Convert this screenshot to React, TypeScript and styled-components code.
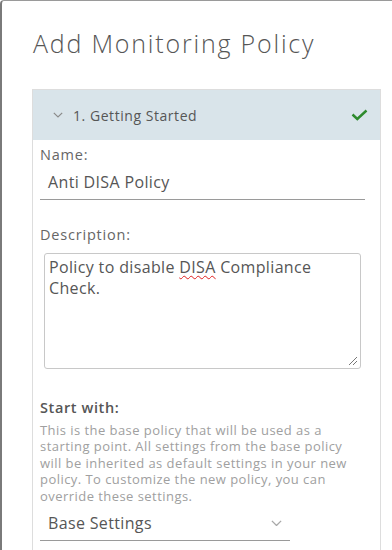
import React from "react";
import styled, { createGlobalStyle } from "styled-components";

const Global = createGlobalStyle`
  html, body { margin: 0; padding: 0; background: #ffffff; }
  body { font-family: "Open Sans", "Liberation Sans", sans-serif; color: #565656; }
  * { box-sizing: border-box; }
`;

const Modal = styled.div`
  width: 392px;
  height: 550px;
  border-top: 1px solid #9a9a9a;
  border-left: 2px solid #7a7a7a;
  border-top-left-radius: 4px;
  padding: 26px 0 0 30px;
  overflow: hidden;
  background: #fff;
`;

const Title = styled.h1`
  margin: 0 0 30px 1px;
  font-size: 25px;
  line-height: 32px;
  font-weight: 300;
  color: #565656;
  letter-spacing: 1.8px;
  white-space: nowrap;
`;

const Panel = styled.section`
  width: 349px;
  border: 1px solid #dddddd;
  border-bottom: none;
  height: 470px;
`;

const Header = styled.div`
  height: 50px;
  background: #d9e4ea;
  display: flex;
  align-items: center;
  padding: 0 12px 0 20px;
  gap: 10px;
`;

const HeaderTitle = styled.span`
  flex: 1;
  font-size: 14px;
  color: #565656;
  padding-top: 1px;
  letter-spacing: 0.55px;
`;

const Body = styled.div`
  padding: 5px 15px 0 7px;
  display: flex;
  flex-direction: column;
`;

const Label = styled.label<{ $bold?: boolean }>`
  font-size: 14.5px;
  line-height: 20px;
  color: ${(p) => (p.$bold ? "#565656" : "#666666")};
  font-weight: ${(p) => (p.$bold ? 600 : 400)};
  letter-spacing: ${(p) => (p.$bold ? "0.6px" : "0.8px")};
`;

const UnderlineField = styled.div<{ $width: number }>`
  width: ${(p) => p.$width}px;
  border-bottom: 1px solid #9a9a9a;
  height: 35px;
  padding: 0 8px;
  display: flex;
  align-items: center;
  justify-content: space-between;
  font-size: 16px;
  letter-spacing: 0.35px;
  color: #565656;
`;

const Spacer = styled.div<{ $h: number }>`
  height: ${(p) => p.$h}px;
`;

const TextArea = styled.div`
  position: relative;
  margin-left: 4px;
  width: 317px;
  height: 116px;
  border: 1px solid #c8c8c8;
  border-radius: 3px;
  padding: 3px 4px;
  font-size: 16px;
  letter-spacing: 0.35px;
  line-height: 21px;
  color: #565656;
`;

const Misspelled = styled.span`
  text-decoration: underline wavy #e02020;
  text-decoration-thickness: 1px;
  text-underline-offset: 2px;
`;

const Grip = styled.svg`
  position: absolute;
  right: 2px;
  bottom: 2px;
`;

const Help = styled.p`
  margin: 4px 0 2px 0;
  font-size: 13px;
  line-height: 16.4px;
  letter-spacing: 0.45px;
  color: #a0a0a0;
  white-space: nowrap;
`;

const Chevron = ({ color, size = 10 }: { color: string; size?: number }) => (
  <svg width={size} height={size * 0.6} viewBox="0 0 10 6" fill="none">
    <path d="M0.8 0.8 L5 5 L9.2 0.8" stroke={color} strokeWidth="1.2" />
  </svg>
);

export default function App() {
  return (
    <>
      <Global />
      <Modal>
        <Title>Add Monitoring Policy</Title>
        <Panel>
          <Header>
            <Chevron color="#8c8c8c" />
            <HeaderTitle>1. Getting Started</HeaderTitle>
            <svg width="17" height="12" viewBox="0 0 17 12" fill="none">
              <path d="M1.5 5.5 L6.3 10 L15.5 1.5" stroke="#2e8b2e" strokeWidth="2.4" />
            </svg>
          </Header>
          <Body>
            <Label>Name:</Label>
            <UnderlineField $width={325}>Anti DISA Policy</UnderlineField>
            <Spacer $h={25} />
            <Label>Description:</Label>
            <Spacer $h={8} />
            <TextArea>
              Policy to disable <Misspelled>DISA</Misspelled> Compliance Check.
              <Grip width="11" height="11" viewBox="0 0 11 11">
                <path d="M10 2 L2 10 M10 6 L6 10" stroke="#777" strokeWidth="1" />
              </Grip>
            </TextArea>
            <Spacer $h={29} />
            <Label $bold>Start with:</Label>
            <Help>
              This is the base policy that will be used as a<br />
              starting point. All settings from the base policy<br />
              will be inherited as default settings in your new<br />
              policy. To customize the new policy, you can<br />
              override these settings.
            </Help>
            <UnderlineField $width={250}>
              <span>Base Settings</span>
              <Chevron color="#a8a8a8" size={11} />
            </UnderlineField>
          </Body>
        </Panel>
      </Modal>
    </>
  );
}
